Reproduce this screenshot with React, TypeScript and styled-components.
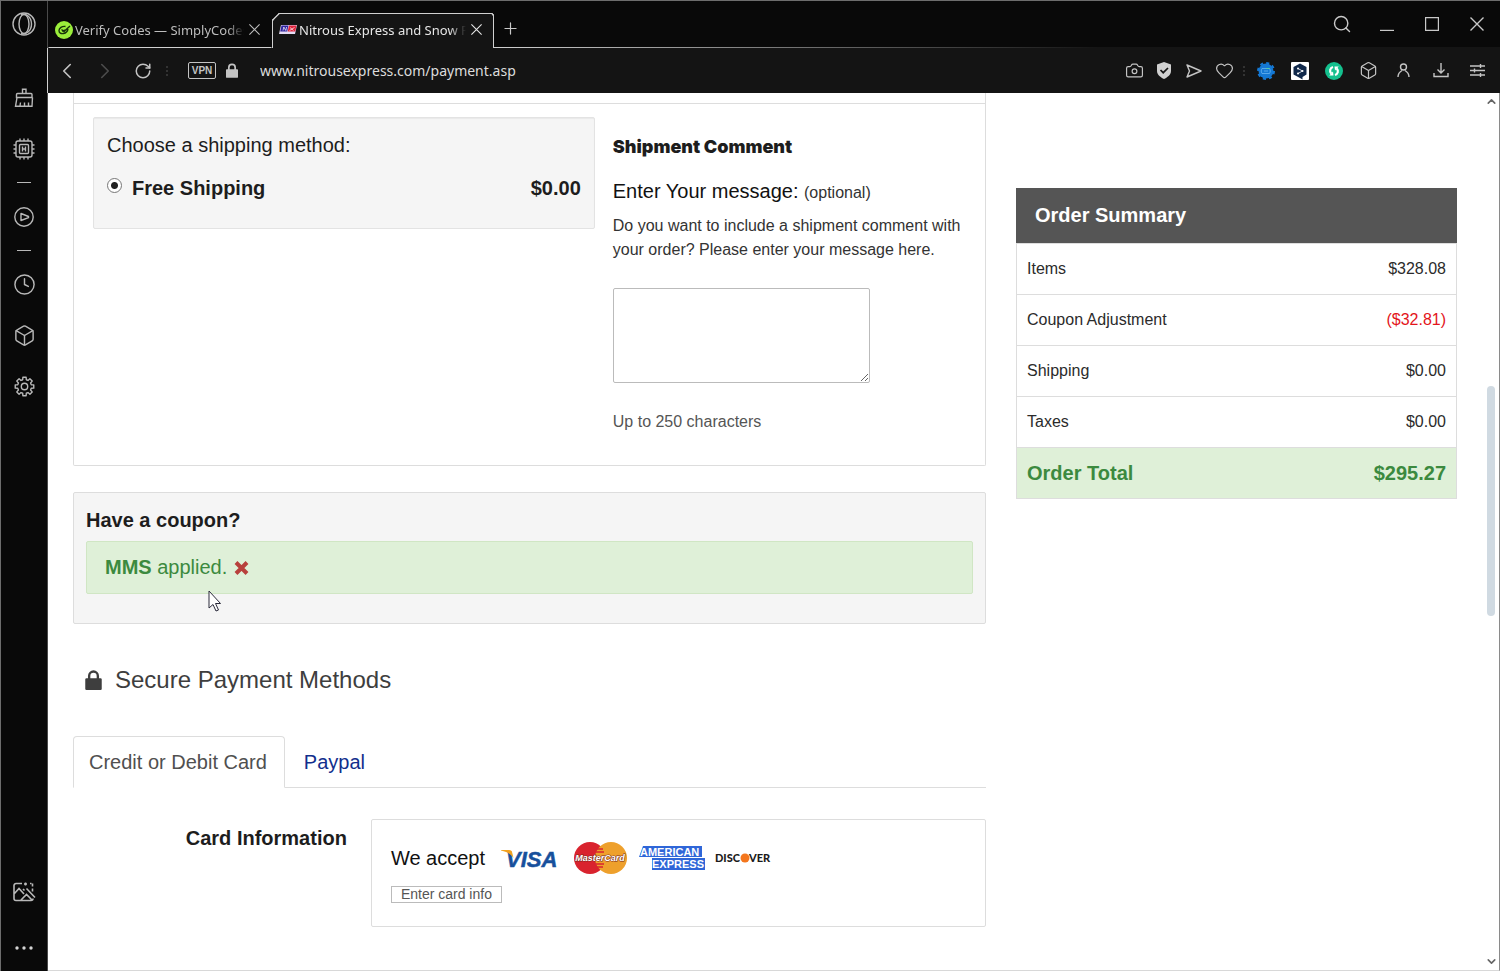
import React from "react";
import styled, { createGlobalStyle } from "styled-components";
import {
  Box,
  Camera,
  ChevronLeft,
  ChevronRight,
  ChevronDown,
  ChevronUp,
  Clock,
  Heart,
  Plus,
  RotateCw,
  Search,
} from "lucide-react";

const GlobalStyle = createGlobalStyle`
  * { box-sizing: border-box; }
  body {
    margin: 0;
    background: #fff;
    font-family: "Liberation Sans", Arial, sans-serif;
    font-size: 16px;
    color: #1d1d1d;
  }
  h2, h3, p { margin: 0; font-weight: normal; }
  button { font: inherit; color: inherit; background: none; border: 0; padding: 0; }
  svg { display: block; flex: none; }
`;

const Window = styled.div`
  display: grid;
  grid-template-columns: 48px minmax(0, 1fr);
  min-height: 100vh;
  border-top: 1px solid #6d6d6d;
`;

/* ---------- sidebar ---------- */

const Sidebar = styled.nav`
  display: flex;
  flex-direction: column;
  background: #090909;
  border-left: 1px solid #6d6d6d;
  border-right: 1px solid #4a4a4a;
  color: #b8b8b8;
`;

const SideButton = styled.button<{ $height?: number }>`
  display: flex;
  align-items: center;
  justify-content: center;
  height: ${(p) => p.$height ?? 51}px;
`;

const SideGroup = styled.div<{ $bottom?: boolean }>`
  display: flex;
  flex-direction: column;
  gap: ${(p) => (p.$bottom ? 10 : 0)}px;
  margin: ${(p) => (p.$bottom ? "auto 0 0" : "25px 0 0")};
`;

const SideDash = styled.span`
  align-self: center;
  width: 14px;
  height: 1px;
  margin: 8px 0;
  background: #b8b8b8;
`;

/* ---------- browser chrome ---------- */

const Main = styled.div`
  display: flex;
  flex-direction: column;
  min-width: 0;
`;

const TabBar = styled.div`
  display: flex;
  height: 47px;
  background: #090909;
  color: #c9c9c9;
`;

const Tab = styled.div<{ $active?: boolean }>`
  display: flex;
  align-items: center;
  width: ${(p) => (p.$active ? 222 : 224)}px;
  height: 35px;
  margin-top: 12px;
  padding: 0 11px ${(p) => (p.$active ? 3 : 2)}px 6px;
  border: 1px solid ${(p) => (p.$active ? "#d0d0d0" : "transparent")};
  border-bottom: ${(p) => (p.$active ? "0" : "1px solid #d0d0d0")};
  border-radius: ${(p) => (p.$active ? "7px 2px 0 0" : "0")};
  corner-shape: bevel;
  background: ${(p) => (p.$active ? "#141414" : "none")};
  color: ${(p) => (p.$active ? "#e6e6e6" : "#bdbdbd")};
`;

const TabTitle = styled.button`
  flex: 1;
  min-width: 0;
  margin: 0 5px 0 2px;
  overflow: hidden;
  white-space: nowrap;
  text-align: left;
  font-family: "Noto Sans", sans-serif;
  font-size: 13px;
  line-height: 20px;
  mask-image: linear-gradient(to right, #000 90%, transparent);
`;

const TabRest = styled.div`
  flex: 1;
  display: flex;
  align-items: center;
  justify-content: space-between;
  border-bottom: 1px solid;
  border-image: linear-gradient(to right, #d0d0d0, #141414 60%) 1;
`;

const NewTab = styled.button`
  margin: 8px 0 0 7px;
`;

const WindowControls = styled.div`
  display: flex;
  padding-right: 1px;
`;

const ControlButton = styled.button`
  display: flex;
  align-items: center;
  justify-content: center;
  width: 45px;
  height: 44px;
`;

const Toolbar = styled.div`
  display: flex;
  align-items: center;
  height: 45px;
  margin-left: -1px;
  padding-right: 4px;
  border-left: 1px solid #d0d0d0;
  background: #141414;
  color: #c4c4c4;
`;

const ToolButton = styled.button<{ $width: number; $dim?: boolean }>`
  display: flex;
  align-items: center;
  justify-content: center;
  width: ${(p) => p.$width}px;
  height: 40px;
  color: ${(p) => (p.$dim ? "#4c4c4c" : "inherit")};
`;

const ToolDivider = styled.span`
  width: 10px;
  height: 12px;
  background: radial-gradient(circle, #333 1px, transparent 1px) center / 10px 4px repeat-y;
`;

const VpnBadge = styled.button`
  width: 28px;
  height: 17px;
  margin: 0 10px 0 16px;
  border: 1px solid #c4c4c4;
  border-radius: 2px;
  font-family: "Liberation Sans", sans-serif;
  font-size: 10px;
  font-weight: bold;
  line-height: 15px;
`;

const Address = styled.input`
  flex: 1;
  min-width: 0;
  margin-left: 22px;
  padding: 0;
  border: 0;
  outline: 0;
  background: none;
  color: #dcdcdc;
  font-family: "Noto Sans", sans-serif;
  font-size: 14px;
`;

/* ---------- page ---------- */

const Viewport = styled.div`
  flex: 1;
  display: flex;
  border-right: 1px solid #8a8a8a;
  border-bottom: 1px solid #d8d8d8;
`;

const Page = styled.main`
  flex: 1;
  min-width: 0;
  display: grid;
  grid-template-columns: minmax(0, 1fr) 441px;
  align-items: start;
  column-gap: 30px;
  padding: 0 25px;
`;

const Scrollbar = styled.div`
  display: flex;
  flex-direction: column;
  align-items: center;
  width: 17px;
  padding: 2px 0 2px 1px;
  color: #666;
`;

const ScrollThumb = styled.span`
  width: 8px;
  height: 230px;
  margin: 278px 0 auto;
  border-radius: 4px;
  background: #d0dae2;
`;

const Checkout = styled.div`
  min-width: 0;
`;

const ShippingCard = styled.section`
  padding-top: 10px;
  border: 1px solid #ddd;
  border-top: 0;
  border-radius: 0 0 2px 2px;
`;

const ShippingBody = styled.div`
  display: grid;
  grid-template-columns: 17fr 12fr;
  align-items: start;
  column-gap: 18px;
  padding: 13px 18px 31px 19px;
  border-top: 1px solid #ddd;
`;

const Well = styled.div`
  padding: 12px 13px 25px;
  background: #f5f5f5;
  border: 1px solid #e3e3e3;
  border-radius: 2px;
  box-shadow: inset 0 1px 1px rgba(0, 0, 0, 0.05);
`;

const Lead = styled.h3`
  font-size: 20px;
  line-height: 30px;
`;

const Rate = styled.label`
  display: flex;
  align-items: center;
  margin-top: 13px;
  font-size: 20px;
  line-height: 30px;
  font-weight: bold;
`;

const Radio = styled.input`
  appearance: none;
  width: 15px;
  height: 15px;
  margin: 0 10px 5px 0;
  border: 1px solid #777;
  border-radius: 50%;
  background: radial-gradient(circle, #222 3px, #fff 4px);
`;

const Price = styled.span`
  margin-left: auto;
`;

const CommentTitle = styled.h3`
  margin: 18px 0 17px;
  font-family: Inter, sans-serif;
  font-size: 18px;
  font-weight: 900;
  line-height: 24px;
`;

const CommentLabel = styled.label`
  display: block;
  font-size: 20px;
  line-height: 30px;
  color: #111;
`;

const Optional = styled.span`
  font-size: 16px;
  color: #333;
`;

const Hint = styled.p<{ $muted?: boolean }>`
  margin-top: ${(p) => (p.$muted ? 27 : 6)}px;
  line-height: 24px;
  color: ${(p) => (p.$muted ? "#555" : "#333")};
`;

const CommentBox = styled.textarea`
  display: block;
  width: 257px;
  height: 95px;
  margin-top: 26px;
  border: 1px solid #bbb;
  border-radius: 2px;
  resize: both;
`;

const CouponCard = styled.section`
  position: relative;
  margin-top: 26px;
  padding: 12px 12px 29px;
  background: #f5f5f5;
  border: 1px solid #ddd;
  border-radius: 2px;
`;

const CouponTitle = styled.h3`
  margin-bottom: 6px;
  font-size: 20px;
  font-weight: bold;
  line-height: 30px;
`;

const CouponAlert = styled.div`
  display: flex;
  align-items: center;
  gap: 7px;
  height: 53px;
  padding: 0 18px;
  background: #dff0d8;
  border: 1px solid #d0e6c4;
  border-radius: 2px;
  color: #3c8a3f;
  font-size: 20px;
`;

const Pointer = styled.svg`
  position: absolute;
  left: 134px;
  top: 97px;
`;

const SecureTitle = styled.h2`
  display: flex;
  align-items: center;
  gap: 13px;
  margin: 38px 0 38px 12px;
  font-size: 24px;
  line-height: 36px;
  color: #3e3e3e;
`;

const PayTabs = styled.div`
  display: flex;
  border-bottom: 1px solid #ddd;
`;

const PayTab = styled.a<{ $active?: boolean }>`
  height: 52px;
  margin-bottom: -1px;
  padding: ${(p) => (p.$active ? "0 17px 0 15px" : "0 18px")};
  border: 1px solid ${(p) => (p.$active ? "#ddd" : "transparent")};
  border-bottom-color: ${(p) => (p.$active ? "#fff" : "transparent")};
  border-radius: 4px 4px 0 0;
  color: ${(p) => (p.$active ? "#505050" : "#122f8d")};
  font-size: 20px;
  line-height: 50px;
  text-decoration: none;
`;

const CardRow = styled.div`
  display: grid;
  grid-template-columns: 30% minmax(0, 1fr);
  column-gap: 24px;
  margin: 31px 0 43px;
`;

const CardLabel = styled.h3`
  padding-top: 4px;
  text-align: right;
  font-size: 20px;
  font-weight: bold;
  line-height: 30px;
`;

const CardPanel = styled.div`
  padding: 18px 19px 23px;
  border: 1px solid #ddd;
  border-radius: 2px;
`;

const Brands = styled.div`
  display: flex;
  align-items: center;
  height: 40px;
  font-size: 20px;
  color: #111;

  svg:nth-of-type(1) { margin-left: 16px; }
  svg:nth-of-type(2) { margin-left: 13px; }
  svg:nth-of-type(3) { margin-left: 12px; }
  svg:nth-of-type(4) { margin-left: 9px; }
`;

const CardInfoButton = styled.button`
  display: block;
  height: 17px;
  margin-top: 8px;
  padding: 0 9px;
  border: 1px solid #bbb;
  font-size: 14px;
  line-height: 15px;
  color: #555;
`;

/* ---------- order summary ---------- */

const Summary = styled.table`
  width: 100%;
  margin-top: 95px;
  border-collapse: collapse;
  border: 1px solid #ddd;
  font-size: 16px;
  color: #2b2b2b;

  caption {
    height: 55px;
    padding-left: 19px;
    background: #555;
    color: #fff;
    font-size: 20px;
    font-weight: bold;
    line-height: 54px;
    text-align: left;
  }
`;

const SummaryRow = styled.tr<{ $total?: boolean }>`
  height: 51px;
  background: ${(p) => (p.$total ? "#dff0d8" : "#fff")};
  color: ${(p) => (p.$total ? "#3c8a3f" : "inherit")};
  font-size: ${(p) => (p.$total ? 20 : 16)}px;
  font-weight: ${(p) => (p.$total ? "bold" : "normal")};
  border-top: 1px solid #ddd;

  th {
    padding: 0 10px;
    text-align: left;
    font-weight: inherit;
  }
`;

const Amount = styled.td<{ $negative?: boolean }>`
  padding: 0 10px;
  text-align: right;
  color: ${(p) => (p.$negative ? "#e3151b" : "inherit")};
`;

/* ---------- drawings ---------- */

const line = { fill: "none", stroke: "currentColor", strokeWidth: 1.4 } as const;

const OperaLogo = () => (
  <svg width="24" height="24" viewBox="0 0 24 24" {...line}>
    <circle cx="12" cy="12" r="11" />
    <ellipse cx="12" cy="12" rx="5" ry="9.5" />
    <path d="M9 2.500C14 1 19.500 5 19.500 12S14 23 9 21.500" />
  </svg>
);

const Broom = () => (
  <svg width="20" height="20" viewBox="0 0 20 20" {...line}>
    <path d="M8.500 5.500V1.200h3.500v4.300M2.500 9.500v-3a1 1 0 0 1 1-1h13.500a1 1 0 0 1 1 1v3zM3 9.500L1.500 18.300h16.500l.5-8.800M6 18l.5-3.500M10.500 18v-3.500M14.500 18v-3.500" />
  </svg>
);

const Chip = () => (
  <svg width="22" height="22" viewBox="0 0 22 22" {...line}>
    <rect x="3" y="3" width="16" height="16" rx="2" />
    <rect x="6.500" y="6.500" width="9" height="9" rx="1" />
    <path d="M9.500 8.500v5M12.500 8.500v5M9.500 11h3M7 0.500V3M11 0.500V3M15 0.500V3M7 19v2.500M11 19v2.500M15 19v2.500M0.500 7H3M0.500 11H3M0.500 15H3M19 7h2.500M19 11h2.500M19 15h2.500" />
  </svg>
);

const Player = () => (
  <svg width="20" height="20" viewBox="0 0 20 20" {...line}>
    <circle cx="10" cy="10" r="9.200" />
    <path d="M7 6.500v7l7.500-2.800v-1.200z" strokeLinejoin="round" />
  </svg>
);

const gearOutline = Array.from({ length: 8 }, (_, i) =>
  [
    [-15, 7],
    [-10, 9.4],
    [10, 9.4],
    [15, 7],
  ].map(([offset, radius]) => {
    const a = ((i * 45 + offset) * Math.PI) / 180;
    return `${(10.5 + radius * Math.sin(a)).toFixed(2)},${(10.5 - radius * Math.cos(a)).toFixed(2)}`;
  })
)
  .flat()
  .join(" ");

const Gear = () => (
  <svg width="21" height="21" viewBox="0 0 21 21" {...line} strokeLinejoin="round">
    <polygon points={gearOutline} />
    <circle cx="10.5" cy="10.5" r="3.2" />
  </svg>
);

const MagicPicture = () => (
  <svg width="23" height="20" viewBox="0 0 23 20" {...line} strokeWidth="1.600">
    <path d="M9 1.500H3a2 2 0 0 0-2 2v13a2 2 0 0 0 2 2h15c1.500 0 2-.5 2-2M1 12l5-5.500 5 5.500M8 18l5.500-5.500L19 18M13.500 6.500l8.500 9M12.500 .5v3M11 2h3M17 1.500h1.500M19.500 1.500v3M19.500 6.500v3M10 7l1.500 1.500" />
  </svg>
);

const Dots = () => (
  <svg width="18" height="4" viewBox="0 0 18 4" fill="#d4d4d4">
    <circle cx="2" cy="2" r="1.700" />
    <circle cx="9" cy="2" r="1.700" />
    <circle cx="16" cy="2" r="1.700" />
  </svg>
);

const CrossIcon = ({ size }: { size: number }) => (
  <svg width={size} height={size} viewBox="0 0 14 14" {...line}>
    <path d="M.5 .5l13 13M13.500 .5l-13 13" />
  </svg>
);

const SimplyIcon = () => (
  <svg width="18" height="18" viewBox="0 0 18 18">
    <circle cx="9" cy="9" r="9" fill="#9bee3b" />
    <path
      d="M10.500 5.500C7 5 4 7 4 9.500c0 2.500 2 3.500 4.500 3 2.500-.5 4-2 4.500-4.500M6.500 8.500l2.500 2 6-5.500M7 10l4-1"
      fill="none"
      stroke="#17330a"
      strokeWidth="1.400"
    />
  </svg>
);

const NxIcon = () => (
  <svg width="18" height="9" viewBox="0 0 18 9">
    <path d="M2 0h16l-2 9H0z" fill="#e4dcf4" />
    <path d="M2.500 .5h7l-1.300 6h-7z" fill="#3125a0" />
    <path d="M10 .5h7.500l-1.300 6H8.700z" fill="#e0243c" />
    <path d="M4 5.500l.8-3.500 2 3.500.8-3.500M11 2.500l3.500 3M15.500 2.500l-5 3" stroke="#fff" fill="none" strokeWidth=".7" />
  </svg>
);

const PadLock = ({ width = 14, height = 17 }: { width?: number; height?: number }) => (
  <svg width={width} height={height} viewBox="0 0 14 17" fill="currentColor">
    <path d="M1 7h12a1 1 0 0 1 1 1v8a1 1 0 0 1-1 1H1a1 1 0 0 1-1-1V8a1 1 0 0 1 1-1z" />
    <path d="M3.300 8V5a3.700 3.700 0 0 1 7.400 0v3" fill="none" stroke="currentColor" strokeWidth="2" />
  </svg>
);

const Shield = () => (
  <svg width="16" height="17" viewBox="0 0 16 17">
    <path d="M8 0l7 2.500V9c0 4-4 6.500-7 8-3-1.500-7-4-7-8V2.500z" fill="#d0d0d0" />
    <path d="M4.500 8l2.700 2.700L12 6" fill="none" stroke="#141414" strokeWidth="1.700" />
  </svg>
);

const Send = () => (
  <svg width="16" height="14" viewBox="0 0 16 14" {...line} strokeLinejoin="round">
    <path d="M1 1l14 6-14 6 2.500-6z" />
  </svg>
);

const BlueGear = () => (
  <svg width="18" height="18" viewBox="0 0 18 18">
    <circle cx="9" cy="9" r="7.500" fill="#1478d4" />
    <circle cx="9" cy="9" r="8" fill="none" stroke="#1478d4" strokeWidth="2" strokeDasharray="3.140 3.140" />
    <path d="M5 6.500h7.500M5 11.500h7.500M5 6.500c-1 2-1 3 0 5M12.500 6.500c1 2 1 3 0 5M7 9h4" stroke="#68b4f0" fill="none" strokeWidth=".8" />
    <path d="M9.500 6.500h3" stroke="#54d0a0" />
  </svg>
);

const HexIcon = () => (
  <svg width="18" height="18" viewBox="0 0 18 18">
    <rect width="18" height="18" rx="1" fill="#fff" />
    <path d="M9 1.500l6.500 3.500v7.500L11.500 15v2.500L9 16l-6.500-3.500V5z" fill="#10284a" />
    <path d="M7 6.500l4.500 2.500L7 11.500" fill="none" stroke="#fff" strokeWidth=".8" />
    <circle cx="7" cy="6.500" r="1" fill="#fff" />
    <circle cx="11.500" cy="9" r="1" fill="#fff" />
    <circle cx="7" cy="11.500" r="1" fill="#fff" />
  </svg>
);

const SwapIcon = () => (
  <svg width="18" height="18" viewBox="0 0 18 18">
    <circle cx="9" cy="9" r="9" fill="#14c08e" />
    <path
      d="M8 5C5 6 4.200 9 6.200 11.500M10 13c3-1 3.800-4 1.800-6.500"
      fill="none"
      stroke="#fff"
      strokeWidth="2.200"
    />
    <path d="M8.500 13.500H4.200L8 9.500zM9.500 4.500h4.300L10 8.500z" fill="#fff" />
  </svg>
);

const Person = () => (
  <svg width="13" height="15" viewBox="0 0 13 15" {...line}>
    <circle cx="6.500" cy="4" r="3" />
    <path d="M1 14c0-3 1.500-5 4-6.500M12 14c0-3-1.500-5-4-6.500" />
  </svg>
);

const DownloadIcon = () => (
  <svg width="16" height="15" viewBox="0 0 16 15" {...line}>
    <path d="M8 0v10M4.500 6.500L8 10l3.500-3.500M1 10v3.500h14V10" />
  </svg>
);

const Sliders = () => (
  <svg width="15" height="13" viewBox="0 0 15 13" {...line}>
    <path d="M0 2h15M0 6.500h15M0 11h15M10.500 0v4M4.500 4.500v4M10.500 9v4" />
  </svg>
);

const RemoveMark = () => (
  <svg width="15" height="14" viewBox="0 0 15 14">
    <path d="M2 1.500l11 11M13 1.500l-11 11" stroke="#b8403c" strokeWidth="4" />
  </svg>
);

const VisaLogo = () => (
  <svg width="60" height="26" viewBox="0 0 60 26">
    <text x="5" y="22" fontFamily="Liberation Sans" fontSize="22" fontWeight="bold" fontStyle="italic" fill="#17509c" stroke="#17509c" strokeWidth=".5">
      VISA
    </text>
    <path d="M0 5h8c2 0 3 1 3 2l1.500 6C10 9 6 7 0 5.500z" fill="#f2a11e" />
  </svg>
);

const MasterCardLogo = () => (
  <svg width="53" height="32" viewBox="0 0 53 32">
    <circle cx="16" cy="16" r="16" fill="#d9232e" />
    <circle cx="37" cy="16" r="16" fill="#eea02c" />
    <path d="M23 7h6M22 10h8M22 22h8M23 25h6" stroke="#d9232e" strokeWidth="1.300" />
    <text
      x="26"
      y="19"
      textAnchor="middle"
      fontFamily="Liberation Sans"
      fontSize="9"
      fontWeight="bold"
      fontStyle="italic"
      fill="#fff"
      stroke="#7b2a1d"
      strokeWidth="1"
      paintOrder="stroke"
    >
      MasterCard
    </text>
  </svg>
);

const AmexLogo = () => (
  <svg width="67" height="26" viewBox="0 0 67 26">
    <path d="M4 1h59v11H0z" fill="#2f66d8" />
    <path d="M13 13h53v12H13z" fill="#2f66d8" />
    <g fontFamily="Liberation Sans" fontSize="11" fontWeight="bold" fill="#fff">
      <text x="1" y="11">AMERICAN</text>
      <text x="13" y="23">EXPRESS</text>
    </g>
  </svg>
);

const DiscoverLogo = () => (
  <svg width="60" height="16" viewBox="0 0 60 16">
    <g fontFamily="Lato" fontSize="11" fontWeight="900" fill="#1c1c1c">
      <text x="0" y="12">DISC</text>
      <text x="34" y="12">VER</text>
    </g>
    <circle cx="30" cy="8" r="4.500" fill="#f4761d" />
  </svg>
);

const rows = [
  { label: "Items", amount: "$328.08" },
  { label: "Coupon Adjustment", amount: "($32.81)", negative: true },
  { label: "Shipping", amount: "$0.00" },
  { label: "Taxes", amount: "$0.00" },
];

export default function App() {
  return (
    <>
      <GlobalStyle />
      <Window>
        <Sidebar aria-label="Browser sidebar">
          <SideButton $height={46} aria-label="Opera menu"><OperaLogo /></SideButton>
          <SideGroup>
            <SideButton aria-label="Cleaner"><Broom /></SideButton>
            <SideButton aria-label="Limiter"><Chip /></SideButton>
            <SideDash />
            <SideButton aria-label="Player"><Player /></SideButton>
            <SideDash />
            <SideButton aria-label="History"><Clock size={23} strokeWidth={1.500} /></SideButton>
            <SideButton aria-label="Extensions"><Box size={23} strokeWidth={1.500} /></SideButton>
            <SideButton aria-label="Settings"><Gear /></SideButton>
          </SideGroup>
          <SideGroup $bottom>
            <SideButton $height={46} aria-label="Wallpaper"><MagicPicture /></SideButton>
            <SideButton $height={46} aria-label="More"><Dots /></SideButton>
          </SideGroup>
        </Sidebar>

        <Main>
          <TabBar>
            <Tab>
              <SimplyIcon />
              <TabTitle>Verify Codes — SimplyCodes</TabTitle>
              <button aria-label="Close tab"><CrossIcon size={11} /></button>
            </Tab>
            <Tab $active>
              <NxIcon />
              <TabTitle>Nitrous Express and Snow Performance</TabTitle>
              <button aria-label="Close tab"><CrossIcon size={11} /></button>
            </Tab>
            <TabRest>
              <NewTab aria-label="New tab"><Plus size={19} strokeWidth={1.500} /></NewTab>
              <WindowControls>
                <ControlButton aria-label="Search tabs"><Search size={20} strokeWidth={1.700} /></ControlButton>
                <ControlButton aria-label="Minimize">
                  <svg width="14" height="14" {...line}><path d="M0 13.500h14" /></svg>
                </ControlButton>
                <ControlButton aria-label="Maximize">
                  <svg width="14" height="14" {...line}><path d="M.5 .5h13v13H.5z" /></svg>
                </ControlButton>
                <ControlButton aria-label="Close"><CrossIcon size={14} /></ControlButton>
              </WindowControls>
            </TabRest>
          </TabBar>

          <Toolbar>
            <ToolButton $width={38} aria-label="Back"><ChevronLeft size={26} strokeWidth={1.500} /></ToolButton>
            <ToolButton $width={38} $dim aria-label="Forward"><ChevronRight size={26} strokeWidth={1.500} /></ToolButton>
            <ToolButton $width={38} aria-label="Reload"><RotateCw size={18} strokeWidth={2} /></ToolButton>
            <ToolDivider />
            <VpnBadge>VPN</VpnBadge>
            <PadLock width={12} height={15} />
            <Address aria-label="Address" defaultValue="www.nitrousexpress.com/payment.asp" />
            <ToolButton $width={30} aria-label="Snapshot"><Camera size={19} strokeWidth={1.500} /></ToolButton>
            <ToolButton $width={30} aria-label="Ad blocker"><Shield /></ToolButton>
            <ToolButton $width={30} aria-label="Flow"><Send /></ToolButton>
            <ToolButton $width={30} aria-label="Bookmark"><Heart size={19} strokeWidth={1.500} /></ToolButton>
            <ToolDivider />
            <ToolButton $width={34} aria-label="Extension one"><BlueGear /></ToolButton>
            <ToolButton $width={34} aria-label="Extension two"><HexIcon /></ToolButton>
            <ToolButton $width={34} aria-label="Extension three"><SwapIcon /></ToolButton>
            <ToolButton $width={34} aria-label="Extensions"><Box size={19} strokeWidth={1.500} /></ToolButton>
            <ToolButton $width={37} aria-label="Profile"><Person /></ToolButton>
            <ToolButton $width={37} aria-label="Downloads"><DownloadIcon /></ToolButton>
            <ToolButton $width={37} aria-label="Easy setup"><Sliders /></ToolButton>
          </Toolbar>

          <Viewport>
            <Page>
              <Checkout>
                <ShippingCard>
                  <ShippingBody>
                    <Well>
                      <Lead>Choose a shipping method:</Lead>
                      <Rate>
                        <Radio type="radio" name="shipping" defaultChecked />
                        Free Shipping
                        <Price>$0.00</Price>
                      </Rate>
                    </Well>
                    <div>
                      <CommentTitle>Shipment Comment</CommentTitle>
                      <CommentLabel htmlFor="comment">
                        Enter Your message: <Optional>(optional)</Optional>
                      </CommentLabel>
                      <Hint>
                        Do you want to include a shipment comment with your order? Please enter your message here.
                      </Hint>
                      <CommentBox id="comment" />
                      <Hint $muted>Up to 250 characters</Hint>
                    </div>
                  </ShippingBody>
                </ShippingCard>

                <CouponCard>
                  <CouponTitle>Have a coupon?</CouponTitle>
                  <CouponAlert>
                    <span><b>MMS</b> applied.</span>
                    <button aria-label="Remove coupon"><RemoveMark /></button>
                  </CouponAlert>
                  <Pointer width="14" height="22" viewBox="0 0 14 22">
                    <path d="M1 1v17l4-3.500 3 6.500 2.500-1-3-6.500h5z" fill="#fff" stroke="#2a2a3a" />
                  </Pointer>
                </CouponCard>

                <SecureTitle>
                  <PadLock width={17} height={20} />
                  Secure Payment Methods
                </SecureTitle>

                <PayTabs>
                  <PayTab $active href="#card">Credit or Debit Card</PayTab>
                  <PayTab href="#paypal">Paypal</PayTab>
                </PayTabs>

                <CardRow>
                  <CardLabel>Card Information</CardLabel>
                  <CardPanel>
                    <Brands>
                      We accept
                      <VisaLogo />
                      <MasterCardLogo />
                      <AmexLogo />
                      <DiscoverLogo />
                    </Brands>
                    <CardInfoButton>Enter card info</CardInfoButton>
                  </CardPanel>
                </CardRow>
              </Checkout>

              <Summary>
                <caption>Order Summary</caption>
                <tbody>
                  {rows.map((r) => (
                    <SummaryRow key={r.label}>
                      <th scope="row">{r.label}</th>
                      <Amount $negative={r.negative}>{r.amount}</Amount>
                    </SummaryRow>
                  ))}
                  <SummaryRow $total>
                    <th scope="row">Order Total</th>
                    <Amount>$295.27</Amount>
                  </SummaryRow>
                </tbody>
              </Summary>
            </Page>
            <Scrollbar aria-hidden="true">
              <ChevronUp size={13} strokeWidth={3} />
              <ScrollThumb />
              <ChevronDown size={13} strokeWidth={3} />
            </Scrollbar>
          </Viewport>
        </Main>
      </Window>
    </>
  );
}
